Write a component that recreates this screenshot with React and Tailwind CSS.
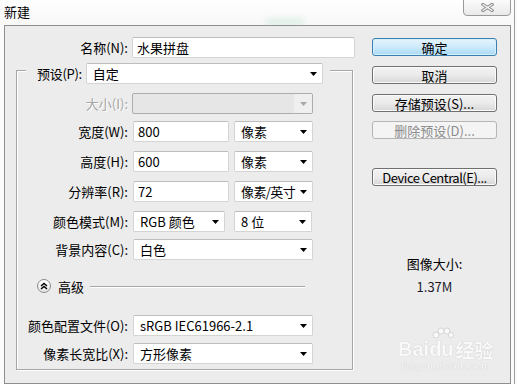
import React from "react";

const Arrow = ({ c = "#000" }) => (
  <svg width="7" height="4" viewBox="0 0 7 4" className="shrink-0">
    <path d="M0 0H7L3.5 4Z" fill={c} />
  </svg>
);

function Field({ w, children, pl = "pl-[4px]" }) {
  return (
    <div className={`h-[21px] ${w} bg-white border border-[#d4d4d4] border-t-[#bdbdbd] rounded-[2px] flex items-center ${pl}`}>
      {children}
    </div>
  );
}

function Select({ w, children, tight }) {
  return (
    <div className={`h-[21px] ${w} bg-white border border-[#d4d4d4] border-t-[#bdbdbd] rounded-[2px] flex items-center justify-between pl-[6px] pr-[5px]`}>
      <span className={tight ? "tracking-[-0.6px]" : ""}>{children}</span>
      <Arrow />
    </div>
  );
}

function Row({ label, mt, children, disabled }) {
  return (
    <div className={`flex items-center ${mt}`}>
      <div className={`w-[111px] text-right ${disabled ? "text-[#a6a6a6] [text-shadow:1px_1px_0_#fff]" : ""}`}>{label}</div>
      <div className="ml-[4px] flex items-center gap-[5px]">{children}</div>
    </div>
  );
}

function Btn({ children, primary, disabled, mt, tight }) {
  const base = "w-[125px] h-[18px] rounded-[3px] border flex items-center justify-center";
  const cls = primary
    ? "border-[#3c7fb1] bg-gradient-to-b from-[#e5f5fd] via-[#cdeafb] to-[#a7d9f5] shadow-[inset_0_0_0_1px_#d6effc]"
    : disabled
    ? "border-[#b5b5b5] bg-[#f4f4f4] text-[#8c8c8c]"
    : "border-[#707070] bg-gradient-to-b from-[#f2f2f2] via-[#ebebeb] to-[#d6d6d6] shadow-[inset_0_0_0_1px_#fbfbfb]";
  return (
    <div className={`${base} ${cls} ${mt}`}>
      <span className={tight ? "tracking-[-0.5px]" : ""}>{children}</span>
    </div>
  );
}

export default function App() {
  return (
    <div className="w-[517px] h-[384px] overflow-hidden bg-[#fbfbfb] text-[13px] leading-none text-black font-['Noto_Sans_CJK_SC','Microsoft_YaHei',sans-serif] relative flex">
      <div className="w-[514px] flex flex-col">
        {/* title bar */}
        <div className="h-[25px] pl-[4px] pt-[5px] bg-gradient-to-b from-[#fefefe] to-[#f8f8f8] relative">
          <span>新建</span>
          <div className="absolute left-[265px] top-[19px] w-[40px] h-[6px] rounded-full bg-[#cfe9dc] blur-[3px] opacity-70" />
          <div className="absolute left-[463px] top-[-1px] w-[48px] h-[17px] rounded-b-[4px] border border-[#9a9a9a] bg-gradient-to-b from-[#fbfbfb] to-[#e9e9e9] flex items-center justify-center">
            <svg width="13" height="9" viewBox="0 0 13 9">
              <path d="M2 1.5L11 7.5M11 1.5L2 7.5" stroke="#8a8a8a" strokeWidth="3.2" strokeLinecap="square" />
              <path d="M2 1.5L11 7.5M11 1.5L2 7.5" stroke="#fdfdfd" strokeWidth="1.2" strokeLinecap="square" />
            </svg>
          </div>
        </div>

        {/* panel */}
        <div className="ml-[4px] w-[507px] h-[359px] border border-[#8e8e8e] bg-[#ececec] flex relative">
          {/* left column */}
          <div className="w-[367px] flex flex-col">
            <div className="mt-[11px] flex items-center">
              <div className="w-[123px] text-right">名称(N):</div>
              <div className="ml-[4px]">
                <Field w="w-[223px]">水果拼盘</Field>
              </div>
            </div>

            <div className="mt-[12px] ml-[11px] w-[337px] h-[300px] border border-[#a6a6a6] shadow-[1px_1px_0_#fff,inset_1px_1px_0_#fff] relative flex flex-col">
              <div className="absolute top-[-8px] left-[9px] pl-[11px] pr-[7px] bg-[#ececec] flex items-center">
                <span className="tracking-[-0.3px]">预设(P):</span>
                <div className="ml-[4px]">
                  <Select w="w-[237px]">自定</Select>
                </div>
              </div>

              <Row label="大小(I):" mt="mt-[22px]" disabled>
                <div className="h-[21px] w-[181px] border border-[#adadad] rounded-[2px] bg-[#e6e6e6] flex items-center justify-end">
                  <div className="h-full w-[18px] bg-[#efefef] flex items-center justify-center">
                    <Arrow c="#a8a8a8" />
                  </div>
                </div>
              </Row>
              <Row label="宽度(W):" mt="mt-[7px]">
                <div className="ml-[1px]"><Field w="w-[96px]">800</Field></div>
                <Select w="w-[79px]">像素</Select>
              </Row>
              <Row label="高度(H):" mt="mt-[9px]">
                <div className="ml-[1px]"><Field w="w-[96px]">600</Field></div>
                <Select w="w-[79px]">像素</Select>
              </Row>
              <Row label="分辨率(R):" mt="mt-[9px]">
                <div className="ml-[1px]"><Field w="w-[96px]">72</Field></div>
                <Select w="w-[79px]" tight>像素/英寸</Select>
              </Row>
              <Row label="颜色模式(M):" mt="mt-[9px]">
                <div className="ml-[1px]"><Select w="w-[92px]">RGB 颜色</Select></div>
                <div className="ml-[4px]"><Select w="w-[78px]">8 位</Select></div>
              </Row>
              <Row label="背景内容(C):" mt="mt-[7px]">
                <div className="ml-[1px]"><Select w="w-[180px]">白色</Select></div>
              </Row>

              <div className="mt-[19px] ml-[20px] h-[14px] flex items-center">
                <div className="w-[14px] h-[14px] rounded-full border border-[#8a8a8a] bg-gradient-to-b from-white to-[#e4e4e4] flex items-center justify-center">
                  <svg width="8" height="8" viewBox="0 0 8 8">
                    <path d="M1 4L4 1.5L7 4M1 7L4 4.5L7 7" stroke="#000" strokeWidth="1.4" fill="none" />
                  </svg>
                </div>
                <span className="ml-[7px]">高级</span>
                <div className="ml-[6px] w-[215px] h-px bg-[#a6a6a6] shadow-[0_1px_0_#fff]" />
              </div>

              <Row label="颜色配置文件(O):" mt="mt-[22px]">
                <div className="ml-[1px]"><Select w="w-[180px]">sRGB IEC61966-2.1</Select></div>
              </Row>
              <Row label="像素长宽比(X):" mt="mt-[7px]">
                <div className="ml-[1px]"><Select w="w-[180px]">方形像素</Select></div>
              </Row>
            </div>
          </div>

          {/* right column */}
          <div className="w-[125px] flex flex-col">
            <Btn primary mt="mt-[12px]">确定</Btn>
            <Btn mt="mt-[10px]">取消</Btn>
            <Btn mt="mt-[10px]">存储预设(S)...</Btn>
            <Btn disabled mt="mt-[9px]">删除预设(D)...</Btn>
            <Btn mt="mt-[29px]" tight>Device Central(E)...</Btn>
            <div className="mt-[71px] text-center">图像大小:</div>
            <div className="mt-[10px] text-center text-[#1a1a2a]">1.37M</div>
          </div>

          {/* watermark */}
          <div className="absolute left-[393px] top-[313px] flex flex-col items-center text-white opacity-70 [text-shadow:0_0_1px_#bdbdbd,0_0_1px_#bdbdbd] pointer-events-none">
            <div className="flex items-end text-[20px] font-bold leading-none font-['Liberation_Sans',sans-serif]">
              <span>Bai</span>
              <span className="relative">
                du
                <svg className="absolute left-[3px] top-[-12px]" width="22" height="12" viewBox="0 0 22 12">
                  <circle cx="4" cy="8" r="3" fill="#fff" stroke="#c4c4c4" strokeWidth="0.8" />
                  <circle cx="9" cy="4" r="3" fill="#fff" stroke="#c4c4c4" strokeWidth="0.8" />
                  <circle cx="15" cy="4" r="3" fill="#fff" stroke="#c4c4c4" strokeWidth="0.8" />
                  <circle cx="19" cy="8" r="2.6" fill="#fff" stroke="#c4c4c4" strokeWidth="0.8" />
                </svg>
              </span>
              <span className="ml-[2px] text-[19px] font-['Noto_Sans_CJK_SC',sans-serif]">经验</span>
            </div>
            <div className="mt-[3px] text-[10px] tracking-[0.5px] font-['Liberation_Sans',sans-serif]">jingyan.baidu.com</div>
          </div>
        </div>
      </div>
      <div className="w-px h-full bg-[#9c9c9c]" />
    </div>
  );
}
